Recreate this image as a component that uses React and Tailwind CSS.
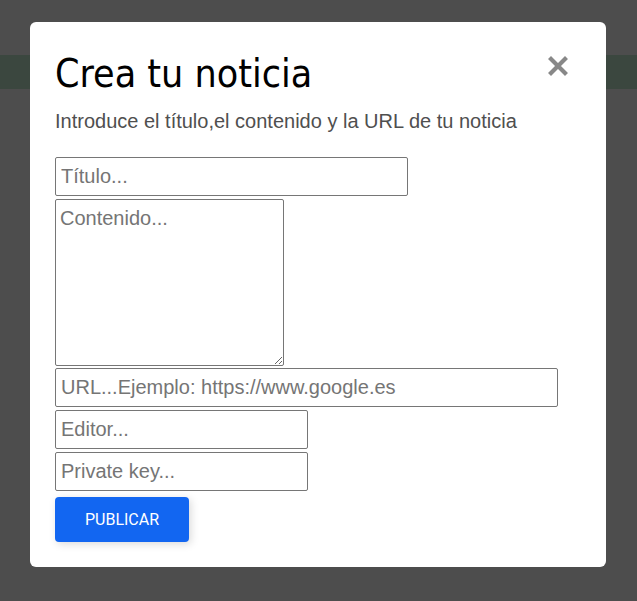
// "Crea tu noticia" modal sitting over a dimmed page.
const fieldCls =
  "block border border-[#767676] rounded-[2px] bg-white text-[20px] text-black placeholder:text-[#757575] px-[5px] outline-none font-['Liberation_Sans',Arial,sans-serif]";

export default function App() {
  return (
    <div className="relative h-[601px] w-full overflow-hidden bg-[#4d4d4d]">
      {/* page underneath the backdrop */}
      <div className="h-[55px]" />
      <div className="h-[34px] bg-[#3b473f]" />

      <div className="absolute left-[30px] top-[22px] w-[576px] h-[545px] rounded-[6px] bg-white px-[25px] pt-[28px]">
        <div className="flex items-start justify-between">
          <h1 className="text-[39px] leading-[48px] text-black font-['DejaVu_Sans_Condensed','Liberation_Sans',sans-serif]">
            Crea tu noticia
          </h1>
          <button className="mt-[6px] mr-[13px] text-[#888]" aria-label="Cerrar">
            <svg width="20" height="20" viewBox="0 0 20 20">
              <path d="M3 3 L17 17 M17 3 L3 17" stroke="currentColor" strokeWidth="4.2" strokeLinecap="square" />
            </svg>
          </button>
        </div>
        <p className="mt-[11px] text-[20px] leading-[24px] text-[#4f4f4f] font-['Liberation_Sans',Arial,sans-serif]">
          Introduce el título,el contenido y la URL de tu noticia
        </p>

        <form className="mt-[24px]" onSubmit={(e) => e.preventDefault()}>
          <input className={`${fieldCls} w-[353px] h-[39px]`} placeholder="Título..." />
          <textarea
            className={`${fieldCls} mt-[3px] w-[229px] h-[167px] !px-[4px] pt-[7px] leading-[23px]`}
            placeholder="Contenido..."
          />
          <input
            className={`${fieldCls} mt-[2px] w-[503px] h-[39px]`}
            placeholder="URL...Ejemplo: https://www.google.es"
          />
          <input className={`${fieldCls} mt-[3px] w-[253px] h-[39px]`} placeholder="Editor..." />
          <input className={`${fieldCls} mt-[3px] w-[253px] h-[39px]`} placeholder="Private key..." />
          <button
            type="submit"
            className="mt-[6px] w-[134px] h-[45px] rounded-[4px] bg-[#1266f1] text-white text-[16px] uppercase font-['Roboto',sans-serif] shadow-[2px_2px_8px_rgba(0,0,0,0.15)]"
          >
            Publicar
          </button>
        </form>
      </div>
    </div>
  );
}
